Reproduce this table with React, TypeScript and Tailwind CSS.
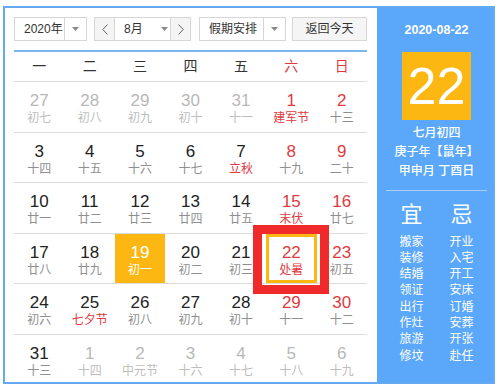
import React from "react";

type Day = { n: number; l: string; dim?: boolean; redN?: boolean; redL?: boolean; sel?: boolean; today?: boolean };

const rows: Day[][] = [
  [
    { n: 27, l: "初七", dim: true },
    { n: 28, l: "初八", dim: true },
    { n: 29, l: "初九", dim: true },
    { n: 30, l: "初十", dim: true },
    { n: 31, l: "十一", dim: true },
    { n: 1, l: "建军节", redN: true, redL: true },
    { n: 2, l: "十三", redN: true },
  ],
  [
    { n: 3, l: "十四" },
    { n: 4, l: "十五" },
    { n: 5, l: "十六" },
    { n: 6, l: "十七" },
    { n: 7, l: "立秋", redL: true },
    { n: 8, l: "十九", redN: true },
    { n: 9, l: "二十", redN: true },
  ],
  [
    { n: 10, l: "廿一" },
    { n: 11, l: "廿二" },
    { n: 12, l: "廿三" },
    { n: 13, l: "廿四" },
    { n: 14, l: "廿五" },
    { n: 15, l: "末伏", redN: true, redL: true },
    { n: 16, l: "廿七", redN: true },
  ],
  [
    { n: 17, l: "廿八" },
    { n: 18, l: "廿九" },
    { n: 19, l: "初一", sel: true },
    { n: 20, l: "初二" },
    { n: 21, l: "初三" },
    { n: 22, l: "处暑", redN: true, redL: true, today: true },
    { n: 23, l: "初五", redN: true },
  ],
  [
    { n: 24, l: "初六" },
    { n: 25, l: "七夕节", redL: true },
    { n: 26, l: "初八" },
    { n: 27, l: "初九" },
    { n: 28, l: "初十" },
    { n: 29, l: "十一", redN: true },
    { n: 30, l: "十二", redN: true },
  ],
  [
    { n: 31, l: "十三" },
    { n: 1, l: "十四", dim: true },
    { n: 2, l: "中元节", dim: true },
    { n: 3, l: "十六", dim: true },
    { n: 4, l: "十七", dim: true },
    { n: 5, l: "十八", dim: true },
    { n: 6, l: "十九", dim: true },
  ],
];

const yi = ["搬家", "装修", "结婚", "领证", "出行", "作灶", "旅游", "修坟"];
const ji = ["开业", "入宅", "开工", "安床", "订婚", "安葬", "开张", "赴任"];

function Caret() {
  return (
    <svg width="7" height="4" viewBox="0 0 7 4">
      <polygon points="0,0 7,0 3.5,4" fill="#8a8a8a" />
    </svg>
  );
}

function Chevron({ dir }: { dir: "l" | "r" }) {
  return (
    <svg width="6" height="11" viewBox="0 0 6 11">
      <polyline
        points={dir === "l" ? "5.5,0.5 0.8,5.5 5.5,10.5" : "0.5,0.5 5.2,5.5 0.5,10.5"}
        fill="none"
        stroke="#666"
        strokeWidth="1"
      />
    </svg>
  );
}

function Cell({ d }: { d: Day }) {
  let numC = "text-[#222]";
  let lunC = "text-[#8f8f8f]";
  if (d.dim) {
    numC = "text-[#b8b8b8]";
    lunC = "text-[#bdbdbd]";
  }
  if (d.redN) numC = "text-[#e03a3e]";
  if (d.redL) lunC = "text-[#e03a3e]";
  if (d.sel) {
    numC = "text-white";
    lunC = "text-white";
  }
  return (
    <div
      className={
        "relative flex flex-col items-center pt-[10px] h-full " +
        (d.sel ? "bg-[#fcb712] " : "")
      }
    >
      {d.today && (
        <div className="absolute inset-0 border-[3px] border-[#fcb712]" />
      )}
      <div className={"relative text-[17px] leading-[17px] " + numC}>{d.n}</div>
      <div className={"relative mt-[2px] text-[12px] leading-[14px] whitespace-nowrap " + lunC}>{d.l}</div>
      {d.today && (
        <div className="absolute left-[-13px] top-[-9px] w-[76px] h-[69px] border-[9px] border-[#f02a2a] z-10" />
      )}
    </div>
  );
}

export default function App() {
  return (
    <div className="w-[500px] h-[388px] bg-white pt-[6px] pl-[3px] font-['Liberation_Sans','Noto_Sans_CJK_SC',sans-serif]">
      <div className="w-[492px] h-[378px] border-2 border-[#64a9f2] flex">
        {/* left */}
        <div className="w-[372px] pl-[9px] pt-[9px] flex flex-col">
          <div className="w-[353px] h-[24px] flex text-[12px] text-[#333] whitespace-nowrap">
            <div className="w-[73px] h-full border border-[#d6d6d6] flex">
              <div className="w-[50px] border-r border-[#d6d6d6] flex items-center pl-[9px]">2020年</div>
              <div className="flex-1 flex items-center justify-center">
                <Caret />
              </div>
            </div>
            <div className="ml-[7px] w-[97px] h-full border border-[#d6d6d6] flex">
              <div className="w-[20px] bg-[#f4f4f4] border-r border-[#d6d6d6] flex items-center justify-center">
                <Chevron dir="l" />
              </div>
              <div className="flex-1 flex items-center pl-[9px]">
                <span>8月</span>
                <span className="ml-[18px] flex items-center">
                  <Caret />
                </span>
              </div>
              <div className="w-[20px] bg-[#f4f4f4] border-l border-[#d6d6d6] flex items-center justify-center">
                <Chevron dir="r" />
              </div>
            </div>
            <div className="ml-[8px] w-[87px] h-full border border-[#d6d6d6] flex">
              <div className="w-[64px] border-r border-[#d6d6d6] flex items-center pl-[9px]">假期安排</div>
              <div className="flex-1 flex items-center justify-center">
                <Caret />
              </div>
            </div>
            <div className="ml-[6px] flex-1 h-full border border-[#d6d6d6] bg-[#f5f5f5] flex items-center justify-center">
              返回今天
            </div>
          </div>
          <div className="mt-[9px] w-[353px] h-[2px] bg-[#7ab6f0]" />
          <div className="w-[353px] h-[30px] border-b border-[#dcdcdc] grid grid-cols-7 text-[14px]">
            {["一", "二", "三", "四", "五", "六", "日"].map((w, i) => (
              <div
                key={w}
                className={"flex items-center justify-center " + (i >= 5 ? "text-[#e03a3e]" : "text-[#333]")}
              >
                {w}
              </div>
            ))}
          </div>
          {rows.map((r, ri) => (
            <div
              key={ri}
              className={
                "w-[353px] grid grid-cols-7 " +
                (ri < 5 ? "h-[50.5px] border-b border-[#dcdcdc]" : "flex-1")
              }
            >
              {r.map((d, di) => (
                <Cell key={di} d={d} />
              ))}
            </div>
          ))}
        </div>
        {/* right panel */}
        <div className="flex-1 bg-[#5ba7f9] pl-[9px] pr-[6px] pt-[14px] flex flex-col items-center text-white">
          <div className="text-[12.5px] leading-[16px] font-semibold">2020-08-22</div>
          <div className="mt-[14px] w-[69px] h-[68px] bg-[#fcb712] flex items-center justify-center text-[52px] leading-none">
            22
          </div>
          <div className="mt-[3.5px] flex flex-col items-center text-[12px] leading-[19px] font-medium">
            <div>七月初四</div>
            <div>庚子年【鼠年】</div>
            <div>甲申月 丁酉日</div>
          </div>
          <div className="mt-[9.5px] w-[101px] h-px bg-[#a9d0fb]" />
          <div className="mt-[11px] w-[100px] grid grid-cols-2 text-[22px] leading-[26px]">
            <div className="text-center">宜</div>
            <div className="text-center">忌</div>
          </div>
          <div className="mt-[5.5px] w-[100px] grid grid-cols-2 text-[12px] leading-[16.3px]">
            <div className="flex flex-col items-center">
              {yi.map((t) => (
                <div key={t}>{t}</div>
              ))}
            </div>
            <div className="flex flex-col items-center">
              {ji.map((t) => (
                <div key={t}>{t}</div>
              ))}
            </div>
          </div>
        </div>
      </div>
    </div>
  );
}
